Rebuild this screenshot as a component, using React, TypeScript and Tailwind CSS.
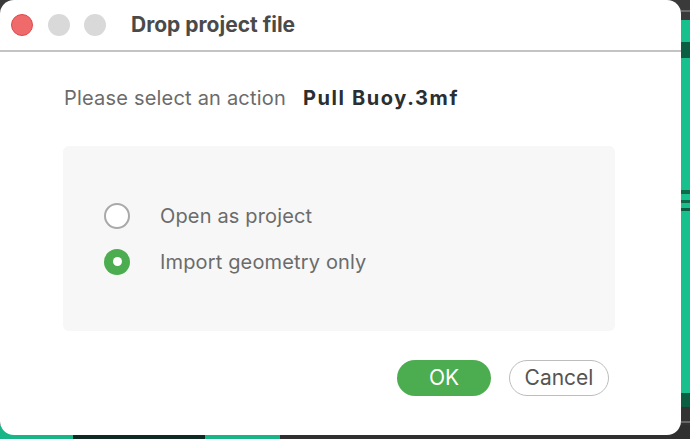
const font = { fontFamily: "Inter, 'Noto Sans', sans-serif" };

function Backdrop() {
  return (
    <div className="absolute inset-0">
      {/* right edge of the app behind the dialog */}
      <div className="absolute right-0 top-0 flex h-full w-[9px] flex-col">
        <div className="h-[10px] bg-[#3a3a3a]" />
        <div className="h-[2px] bg-[#6a6a6a]" />
        <div className="h-[8px] bg-[#3a3a3a]" />
        <div className="h-[22px] bg-[#18c08e]" />
        <div className="h-[16px] bg-[#0b5e42]" />
        <div className="h-[132px] bg-[#18c08e]" />
        <div className="h-[4px] bg-[#0d6b4a]" />
        <div className="h-[6px] bg-[#18c08e]" />
        <div className="h-[3px] bg-[#0d6b4a]" />
        <div className="h-[5px] bg-[#18c08e]" />
        <div className="h-[3px] bg-[#0b5e42]" />
        <div className="h-[182px] bg-[#18c08e]" />
        <div className="h-[14px] bg-[#0b5e42]" />
        <div className="h-[14px] bg-[#333333]" />
        <div className="h-[2px] bg-[#666666]" />
        <div className="flex-1 bg-[#333333]" />
      </div>
      {/* bottom edge */}
      <div className="absolute bottom-0 left-0 flex h-[14px] w-full">
        <div className="w-[73px] bg-[#18b587]" />
        <div className="w-[132px] bg-[#0f2a22]" />
        <div className="w-[75px] bg-[#18b587]" />
        <div className="flex-1 bg-[#2f2f2f]" />
      </div>
    </div>
  );
}

function Radio({ checked, label }: { checked?: boolean; label: string }) {
  return (
    <div className="flex h-[26px] items-center gap-[30px]">
      {checked ? (
        <span className="flex h-[26px] w-[26px] items-center justify-center rounded-full bg-[#4cad50]">
          <span className="h-[9px] w-[9px] rounded-full bg-white" />
        </span>
      ) : (
        <span className="h-[26px] w-[26px] rounded-full border-2 border-[#a9a9a9] bg-white" />
      )}
      <span className="text-[20px] tracking-[0.15px] text-[#6b6b6b]">{label}</span>
    </div>
  );
}

export default function App() {
  return (
    <div className="relative h-[439px] w-[690px] overflow-hidden bg-[#3a3a3a]" style={font}>
      <Backdrop />
      <div className="relative flex h-[435px] w-[681px] flex-col rounded-[14px] bg-white">
        <div className="flex h-[52px] shrink-0 items-center border-b-2 border-[#c4c4c4] pl-[11px]">
          <span className="h-[22px] w-[22px] rounded-full border border-[#e0494b] bg-[#ef6a6b]" />
          <span className="ml-[15px] h-[22px] w-[22px] rounded-full bg-[#d9d9d9]" />
          <span className="ml-[14px] h-[22px] w-[22px] rounded-full bg-[#d9d9d9]" />
          <span className="ml-[25px] text-[21px] font-bold text-[#4a4a4a]">Drop project file</span>
        </div>
        <div className="flex flex-1 flex-col pl-[64px] pr-[66px] pt-[33px]">
          <div className="flex h-[26px] items-center text-[20px]">
            <span className="tracking-[0.2px] text-[#6b6b6b]">Please select an action</span>
            <span className="ml-[17px] font-bold tracking-[1.6px] text-[#2a2f33]">Pull Buoy.3mf</span>
          </div>
          <div className="-ml-px mt-[35px] flex h-[185px] flex-col justify-center gap-[20px] rounded-[6px] bg-[#f7f7f7] pl-[41px]">
            <Radio label="Open as project" />
            <Radio checked label="Import geometry only" />
          </div>
          <div className="mr-[6px] mt-[29px] flex justify-end gap-[18px]">
            <button className="h-[36px] w-[94px] rounded-full bg-[#4cad50] text-[21px] text-white">OK</button>
            <button className="h-[36px] w-[100px] rounded-full border-[1.5px] border-[#bdbdbd] bg-white text-[21px] text-[#555555]">
              Cancel
            </button>
          </div>
        </div>
      </div>
    </div>
  );
}
